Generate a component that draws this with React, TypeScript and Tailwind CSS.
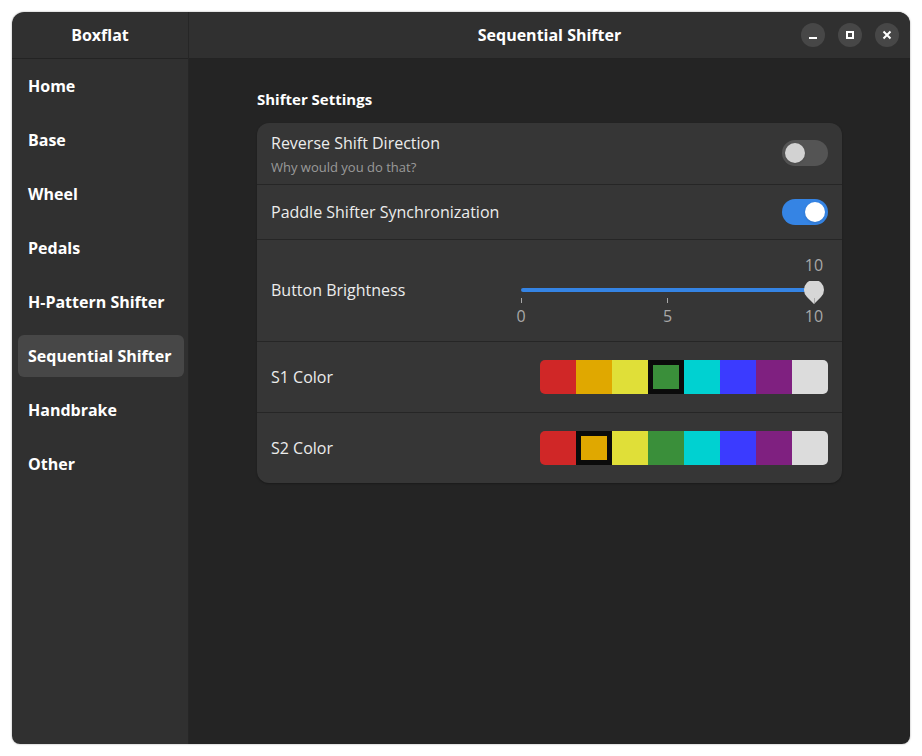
import React, { useState } from 'react';

const NAV = ['Home', 'Base', 'Wheel', 'Pedals', 'H-Pattern Shifter', 'Sequential Shifter', 'Handbrake', 'Other'];

const COLORS = ['#d02727', '#e0a800', '#e0df38', '#3a8f3a', '#00d1d1', '#3b3bff', '#7f2080', '#dcdcdc'];

function Toggle({ on }: { on: boolean }) {
  return (
    <div
      className={`w-[46px] h-[26px] rounded-full p-[3px] flex items-center ${
        on ? 'bg-[#3584e4] justify-end' : 'bg-[#545454] justify-start'
      }`}
    >
      <div className={`w-[20px] h-[20px] rounded-full shadow ${on ? 'bg-white' : 'bg-[#d2d2d2]'}`} />
    </div>
  );
}

function Palette({ selected }: { selected: number }) {
  return (
    <div className="flex rounded-[5px] overflow-hidden h-[34px]">
      {COLORS.map((c, i) =>
        i === selected ? (
          <div key={c} className="w-[36px] h-full bg-[#0b0b0b] flex items-center justify-center">
            <div className="w-[26px] h-[24px]" style={{ backgroundColor: c }} />
          </div>
        ) : (
          <div key={c} className="w-[36px] h-full" style={{ backgroundColor: c }} />
        )
      )}
    </div>
  );
}

function Slider() {
  return (
    <div className="w-[321px] flex flex-col text-[#a8a8a8] text-[16px] leading-none">
      <div className="h-[18px] pt-[1px] flex justify-end">
        <span className="w-[28px] text-center">10</span>
      </div>
      <div className="relative h-[24px] mx-[14px]">
        <div className="absolute left-0 right-0 top-[14px] h-[4px] rounded-full bg-[#3584e4]" />
        <div className="absolute right-[-11px] top-[7px]">
          <svg width="22" height="24" viewBox="0 0 22 24">
            <path d="M11 23 L4 16 A10 10 0 1 1 18 16 Z" fill="#d6d6d6" />
          </svg>
        </div>
      </div>
      <div className="relative h-[26px] mx-[14px]">
        {[0, 5, 10].map((v, i) => (
          <div
            key={v}
            className={`absolute top-0 flex flex-col items-center w-[28px] ${
              i === 0 ? 'left-[-14px]' : i === 1 ? 'left-[calc(50%-14px)]' : 'right-[-14px]'
            }`}
          >
            <div className="w-px h-[5px] bg-[#a8a8a8]" />
            <span className="mt-[5px]">{v}</span>
          </div>
        ))}
      </div>
    </div>
  );
}

function WinButton({ children }: { children: React.ReactNode }) {
  return (
    <div className="w-[24px] h-[24px] rounded-full bg-[#474747] flex items-center justify-center text-white">
      {children}
    </div>
  );
}

export default function App() {
  const [active] = useState('Sequential Shifter');

  return (
    <div className="w-[922px] h-[756px] bg-white p-[12px] font-['Open_Sans',sans-serif]">
      <div className="w-[898px] h-[732px] flex rounded-t-[12px] rounded-b-[8px] overflow-hidden shadow-[0_0_2px_rgba(0,0,0,0.4)]">
        {/* Sidebar */}
        <div className="w-[177px] flex flex-col bg-[#303030] border-r border-[#262626]">
          <div className="h-[47px] flex items-center justify-center border-b border-[#232323] text-white font-bold text-[16px]">
            Boxflat
          </div>
          <div className="flex flex-col pl-[6px] pr-[4px] pt-[6px] gap-[12px]">
            {NAV.map((item) => (
              <div
                key={item}
                className={`h-[42px] flex items-center px-[10px] rounded-[6px] text-white font-bold text-[16px] ${
                  item === active ? 'bg-[#474747]' : ''
                }`}
              >
                {item}
              </div>
            ))}
          </div>
        </div>

        {/* Main */}
        <div className="flex-1 flex flex-col bg-[#242424]">
          <div className="h-[47px] bg-[#303030] border-b border-[#232323] relative flex items-center justify-center text-white font-bold text-[16px]">
            Sequential Shifter
            <div className="absolute right-[11px] top-[11px] flex gap-[13px]">
              <WinButton>
                <div className="w-[8px] h-[2px] bg-white mt-[6px]" />
              </WinButton>
              <WinButton>
                <div className="w-[8px] h-[8px] border-2 border-white" />
              </WinButton>
              <WinButton>
                <svg width="10" height="10" viewBox="0 0 10 10">
                  <path d="M1.5 1.5 L8.5 8.5 M8.5 1.5 L1.5 8.5" stroke="white" strokeWidth="2" />
                </svg>
              </WinButton>
            </div>
          </div>

          <div className="pl-[68px] pt-[29px] w-[653px]">
            <div className="text-white font-bold text-[15px] mb-[12px]">Shifter Settings</div>
            <div className="bg-[#363636] rounded-[12px] flex flex-col text-[#ececec] text-[16px] shadow-[0_1px_2px_rgba(0,0,0,0.3)]">
              <div className="h-[62px] flex items-center justify-between px-[14px] border-b border-[#262626]">
                <div className="flex flex-col pt-[2px]">
                  <span className="leading-[20px]">Reverse Shift Direction</span>
                  <span className="text-[13px] text-[#9a9a9a] leading-[18px] mt-[5px]">Why would you do that?</span>
                </div>
                <Toggle on={false} />
              </div>
              <div className="h-[55px] flex items-center justify-between px-[14px] border-b border-[#262626]">
                <span>Paddle Shifter Synchronization</span>
                <Toggle on={true} />
              </div>
              <div className="h-[102px] flex items-center justify-between pl-[14px] pr-[14px] border-b border-[#262626]">
                <span>Button Brightness</span>
                <Slider />
              </div>
              <div className="h-[71px] flex items-center justify-between px-[14px] border-b border-[#262626]">
                <span>S1 Color</span>
                <Palette selected={3} />
              </div>
              <div className="h-[70px] flex items-center justify-between px-[14px]">
                <span>S2 Color</span>
                <Palette selected={1} />
              </div>
            </div>
          </div>
        </div>
      </div>
    </div>
  );
}
